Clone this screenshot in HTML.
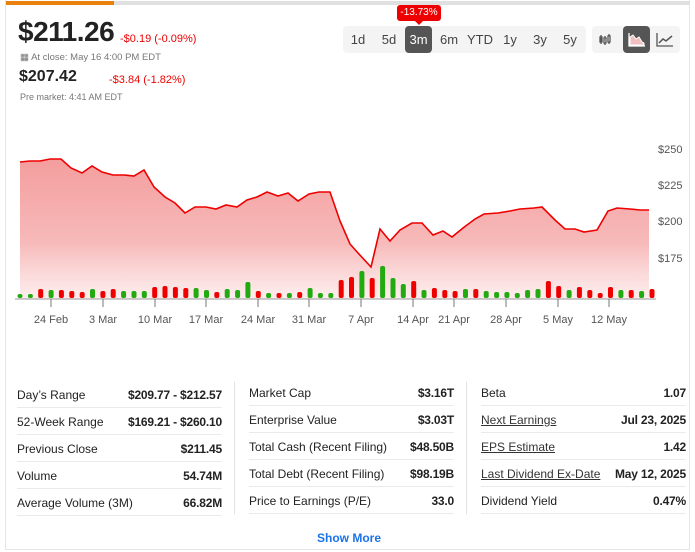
<!DOCTYPE html>
<html><head><meta charset="utf-8"><style>
*{margin:0;padding:0;box-sizing:border-box}
body{width:695px;height:552px;background:#fff;font-family:"Liberation Sans",sans-serif;position:relative;overflow:hidden;color:#222}
.card{position:absolute;left:5px;top:0;width:685px;height:550px;border:1px solid #e6e6e6;border-top:none}
.topbar{position:absolute;left:6px;top:1px;width:684px;height:4px;background:#e0e0e0}
.topbar div{width:108px;height:4px;background:#e8820c}
.a{position:absolute;white-space:nowrap}
.red{color:#e00}
.grp{position:absolute;background:#f4f4f4;border-radius:4px;height:27px}
.btn{position:absolute;top:0;height:27px;line-height:27px;font-size:13px;color:#444;text-align:center}
.stat{position:absolute;font-size:12px;color:#222}
.row{position:absolute;height:27px;border-bottom:1px solid #eaeaea;width:205px}
.row span{position:absolute;top:7px}
.row b{position:absolute;right:0;top:7px;font-weight:bold;letter-spacing:-0.2px}
u{text-decoration:underline;color:#333}
</style></head><body>
<div class="card"></div>
<div class="topbar"><div></div></div>
<div class="a" style="left:18px;top:16px;font-size:28px;font-weight:bold;letter-spacing:-0.5px">$211.26</div>
<div class="a red" style="left:120px;top:33px;font-size:11px">-$0.19 (-0.09%)</div>
<div class="a" style="left:20px;top:52px;font-size:9.5px;color:#777">&#9638; At close: May 16 4:00 PM EDT</div>
<div class="a" style="left:19px;top:68px;font-size:16px;font-weight:bold">$207.42</div>
<div class="a red" style="left:109px;top:74px;font-size:11px">-$3.84 (-1.82%)</div>
<div class="a" style="left:20px;top:92px;font-size:9px;color:#777">Pre market: 4:41 AM EDT</div>

<div class="a" style="left:397px;top:5px;width:44px;height:16px;background:#e00;border-radius:3px;color:#fff;font-size:10px;line-height:16px;text-align:center">-13.73%</div>
<div class="a" style="left:414px;top:20px;width:0;height:0;border-left:5px solid transparent;border-right:5px solid transparent;border-top:5px solid #e00"></div>

<div class="grp" style="left:343px;top:26px;width:243px">
<div class="btn" style="left:0;width:30px">1d</div>
<div class="btn" style="left:31px;width:30px">5d</div>
<div class="btn" style="left:62px;width:27px;background:#555;color:#fff;border-radius:4px">3m</div>
<div class="btn" style="left:92px;width:28px">6m</div>
<div class="btn" style="left:121px;width:32px">YTD</div>
<div class="btn" style="left:155px;width:24px">1y</div>
<div class="btn" style="left:185px;width:24px">3y</div>
<div class="btn" style="left:215px;width:24px">5y</div>
</div>
<div class="grp" style="left:592px;top:26px;width:88px">
<svg class="a" style="left:6px;top:7px" width="14" height="13" viewBox="0 0 14 13"><g stroke="#555" stroke-width="1.3" fill="#555"><line x1="3" y1="2" x2="3" y2="11"/><rect x="2" y="4" width="2" height="5"/><line x1="7" y1="3" x2="7" y2="12"/><rect x="6" y="5" width="2" height="5" fill="#fff"/><line x1="11" y1="1" x2="11" y2="11"/><rect x="10" y="3" width="2" height="6" fill="#fff"/></g></svg>
<div class="a" style="left:31px;top:0;width:27px;height:27px;background:#555;border-radius:4px"></div>
<svg class="a" style="left:36px;top:6px" width="18" height="15" viewBox="0 0 18 15"><path d="M1 1V14H17" stroke="#fff" stroke-width="1.3" fill="none"/><path d="M2 13V5L5 3L8 7L11 5L14 10L16 11V13Z" fill="#f0c0c0" stroke="#fff" stroke-width="1"/></svg>
<svg class="a" style="left:64px;top:6px" width="18" height="15" viewBox="0 0 18 15"><path d="M1 1V14H17" stroke="#555" stroke-width="1.3" fill="none"/><path d="M3 11L7 7L10 9L16 4" stroke="#555" stroke-width="1.5" fill="none"/></svg>
</div>

<svg class="a" style="left:0;top:130px" width="695" height="210" viewBox="0 130 695 210">
<defs><linearGradient id="g" x1="0" y1="0" x2="0" y2="1"><stop offset="0" stop-color="#f28c8c" stop-opacity=".85"/><stop offset=".6" stop-color="#f5a8a8" stop-opacity=".8"/><stop offset="1" stop-color="#fde2e2" stop-opacity=".6"/></linearGradient></defs>
<path d="M20 162L30 161L40 161L50 159L61 159L71 168L82 173L92 166L102 172L113 175L124 175L134 176L144 170L154 187L165 197L175 203L185 213L195 207L206 207L216 209L226 205L237 207L247 200L257 197L267 192L278 196L288 193L298 201L309 194L319 192L330 192L340 221L350 244L358 253L371 267L380 229L390 241L400 230L412 223L422 223L433 235L443 231L452 237L463 228L475 219L484 214L498 213L510 211L520 209L534 208L542 207L555 220L565 229L575 229L584 232L597 230L608 211L617 208L630 209L640 210L649 210L649 299L20 299Z" fill="url(#g)"/>
<path d="M20 162L30 161L40 161L50 159L61 159L71 168L82 173L92 166L102 172L113 175L124 175L134 176L144 170L154 187L165 197L175 203L185 213L195 207L206 207L216 209L226 205L237 207L247 200L257 197L267 192L278 196L288 193L298 201L309 194L319 192L330 192L340 221L350 244L358 253L371 267L380 229L390 241L400 230L412 223L422 223L433 235L443 231L452 237L463 228L475 219L484 214L498 213L510 211L520 209L534 208L542 207L555 220L565 229L575 229L584 232L597 230L608 211L617 208L630 209L640 210L649 210" fill="none" stroke="#e00" stroke-width="1.6"/>
<g id="bars"></g>
<line x1="15" y1="299" x2="656" y2="299" stroke="#999" stroke-width="1"/>
<g stroke="#777" stroke-width="1">
<line x1="51" y1="299" x2="51" y2="307"/><line x1="103" y1="299" x2="103" y2="307"/><line x1="155" y1="299" x2="155" y2="307"/><line x1="206" y1="299" x2="206" y2="307"/><line x1="258" y1="299" x2="258" y2="307"/><line x1="309" y1="299" x2="309" y2="307"/><line x1="361" y1="299" x2="361" y2="307"/><line x1="413" y1="299" x2="413" y2="307"/><line x1="454" y1="299" x2="454" y2="307"/><line x1="506" y1="299" x2="506" y2="307"/><line x1="558" y1="299" x2="558" y2="307"/><line x1="609" y1="299" x2="609" y2="307"/>
</g>
<g font-family="Liberation Sans" font-size="11" fill="#555" text-anchor="middle">
<text x="51" y="323">24 Feb</text><text x="103" y="323">3 Mar</text><text x="155" y="323">10 Mar</text><text x="206" y="323">17 Mar</text><text x="258" y="323">24 Mar</text><text x="309" y="323">31 Mar</text><text x="361" y="323">7 Apr</text><text x="413" y="323">14 Apr</text><text x="454" y="323">21 Apr</text><text x="506" y="323">28 Apr</text><text x="558" y="323">5 May</text><text x="609" y="323">12 May</text>
</g>
<g font-family="Liberation Sans" font-size="11" fill="#555">
<text x="658" y="153">$250</text><text x="658" y="189">$225</text><text x="658" y="225">$200</text><text x="658" y="262">$175</text>
</g>
</svg>
<script>
(function(){var d="g4 g4 r9 g8 r8 r7 r6 g9 r7 r9 g7 g7 g7 r11 r12 r11 r10 g10 g8 r6 g9 g8 g16 r7 g5 r5 g5 r6 g10 g5 g5 r18 r21 g27 r20 g32 g20 g14 r17 g8 r10 r8 r7 g9 r9 g7 g6 g6 g5 g8 g9 r17 r12 g8 r11 r8 r5 r11 g8 r8 g7 r9".split(" ");
var s="";d.forEach(function(v,i){var x=17.5+i*10.36,h=+v.slice(1),c=v[0]=="g"?"#22aa11":"#e00";s+='<rect x="'+x.toFixed(1)+'" y="'+(298-h)+'" width="5" height="'+h+'" rx="2" fill="'+c+'"/>';});
document.getElementById("bars").innerHTML=s;})();
</script>

<div style="position:absolute;left:234px;top:382px;width:1px;height:132px;background:#e2e2e2"></div>
<div style="position:absolute;left:466px;top:382px;width:1px;height:132px;background:#e2e2e2"></div>
<div class="stat">
<div class="row" style="left:17px;top:381px"><span>Day’s Range</span><b>$209.77 - $212.57</b></div>
<div class="row" style="left:17px;top:408px"><span>52-Week Range</span><b>$169.21 - $260.10</b></div>
<div class="row" style="left:17px;top:435px"><span>Previous Close</span><b>$211.45</b></div>
<div class="row" style="left:17px;top:462px"><span>Volume</span><b>54.74M</b></div>
<div class="row" style="left:17px;top:489px"><span>Average Volume (3M)</span><b>66.82M</b></div>
<div class="row" style="left:249px;top:379px"><span>Market Cap</span><b>$3.16T</b></div>
<div class="row" style="left:249px;top:406px"><span>Enterprise Value</span><b>$3.03T</b></div>
<div class="row" style="left:249px;top:433px"><span>Total Cash (Recent Filing)</span><b>$48.50B</b></div>
<div class="row" style="left:249px;top:460px"><span>Total Debt (Recent Filing)</span><b>$98.19B</b></div>
<div class="row" style="left:249px;top:487px"><span>Price to Earnings (P/E)</span><b>33.0</b></div>
<div class="row" style="left:481px;top:379px"><span>Beta</span><b>1.07</b></div>
<div class="row" style="left:481px;top:406px"><span><u>Next Earnings</u></span><b>Jul 23, 2025</b></div>
<div class="row" style="left:481px;top:433px"><span><u>EPS Estimate</u></span><b>1.42</b></div>
<div class="row" style="left:481px;top:460px"><span><u>Last Dividend Ex-Date</u></span><b>May 12, 2025</b></div>
<div class="row" style="left:481px;top:487px"><span>Dividend Yield</span><b>0.47%</b></div>
</div>
<div class="a" style="left:0;width:698px;text-align:center;top:531px;font-size:12px;font-weight:bold;color:#1a73e8">Show More</div>
</body></html>
